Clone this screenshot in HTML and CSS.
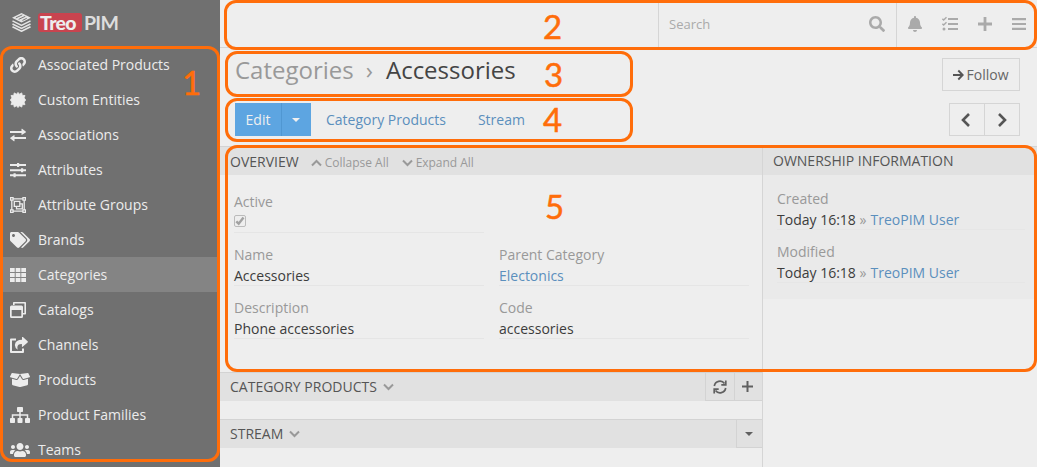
FILE: index.html
```
<!DOCTYPE html>
<html lang="en">
<head>
<meta charset="utf-8">
<title>TreoPIM - Accessories</title>
<link rel="stylesheet" href="styles.css">
</head>
<body>
<div class="app">
  <aside class="sidebar">
    <div class="brand">
      <svg class="brand-mark" viewBox="0 0 20 20"><path fill="#e4e4e4" d="M10 0 20 5 10 10 0 5z"/><path d="M4 5.2 10.8 2M7 6.700 14 3.500M11 7.800 15.500 5.600" stroke="#707070" stroke-width="1"/><path fill="none" stroke="#e4e4e4" stroke-width="1.700" d="M.5 8.300 10 13l9.500-4.700M.5 11.500 10 16.200l9.500-4.700M.5 14.500 10 19.200l9.500-4.700"/></svg>
      <span class="brand-treo">Treo</span><span class="brand-pim">PIM</span>
    </div>
    <nav class="menu">
      <a class="menu-item"><span class="menu-icon"><svg width="16" height="16" viewBox="0 0 512 512"><path d="M326.612 185.391c59.747 59.809 58.927 155.698.36 214.59-.11.12-.24.25-.36.37l-67.2 67.2c-59.27 59.27-155.699 59.262-214.96 0-59.27-59.26-59.27-155.7 0-214.96l37.106-37.106c9.84-9.84 26.786-3.3 27.294 10.606.648 17.722 3.826 35.527 9.69 52.721 1.986 5.822.567 12.262-3.783 16.612l-13.087 13.087c-28.026 28.026-28.905 73.66-1.155 101.96 28.024 28.579 74.086 28.749 102.325.51l67.2-67.19c28.191-28.191 28.073-73.757 0-101.83-3.701-3.694-7.429-6.564-10.341-8.569a16.037 16.037 0 0 1-6.947-12.606c-.396-10.567 3.348-21.456 11.698-29.806l21.054-21.055c5.521-5.521 14.182-6.199 20.584-1.731a152.482 152.482 0 0 1 20.522 17.197zM467.547 44.449c-59.261-59.262-155.69-59.27-214.96 0l-67.2 67.2c-.12.12-.25.25-.36.37-58.566 58.892-59.387 154.781.36 214.59a152.454 152.454 0 0 0 20.521 17.196c6.402 4.468 15.064 3.789 20.584-1.731l21.054-21.055c8.35-8.35 12.094-19.239 11.698-29.806a16.037 16.037 0 0 0-6.947-12.606c-2.912-2.005-6.64-4.875-10.341-8.569-28.073-28.073-28.191-73.639 0-101.83l67.2-67.19c28.239-28.239 74.3-28.069 102.325.51 27.75 28.3 26.872 73.934-1.155 101.96l-13.087 13.087c-4.35 4.35-5.769 10.79-3.783 16.612 5.864 17.194 9.042 34.999 9.69 52.721.509 13.906 17.454 20.446 27.294 10.606l37.106-37.106c59.271-59.259 59.271-155.699.001-214.959z"/></svg></span>Associated Products</a>
      <a class="menu-item"><span class="menu-icon"><svg width="16" height="16" viewBox="0 0 16 16"><path stroke="#ececec" stroke-width=".8" stroke-linejoin="round" d="m8 .4 1.400 1.800L11.800.9l.4 2.400 2.800.2-.9 2.400 1.600 2.100-1.600 2.100.9 2.500-2.800.1-.4 2.400-2.400-1.300L8 15.600l-1.400-1.800-2.400 1.300-.4-2.400-2.800-.1.900-2.500L.3 8l1.600-2.100L1 3.500l2.800-.2.400-2.400 2.400 1.300z"/></svg></span>Custom Entities</a>
      <a class="menu-item"><span class="menu-icon"><svg width="16" height="16" viewBox="0 0 16 16"><path d="M0 3.900h11.500V2.100q0-.7.6-.3l3.600 2.700q.5.500 0 .9l-3.600 2.400q-.6.400-.6-.3V5.900H0zM16 12.100H4.500v1.800q0 .7-.6.300L.3 11.600q-.5-.5 0-.9l3.600-2.500q.6-.4.6.3v1.600H16z"/></svg></span>Associations</a>
      <a class="menu-item"><span class="menu-icon"><svg width="16" height="16" viewBox="0 0 16 16"><path d="M0 2h16v2H0zM0 7.200h16v2H0zM0 12.300h16v2H0zM7 1h2.200v4H7zM11 6.200h2.200v4H11zM3.500 11.300h2.200v4H3.500z"/></svg></span>Attributes</a>
      <a class="menu-item"><span class="menu-icon"><svg width="16" height="16" viewBox="0 0 16 16"><path fill="none" stroke="#ececec" stroke-width="1.300" d="M1.800 1.800h12.400v12.400H1.800zM4.300 4.300h5.500v5H4.300zM9.800 6.800h2.500v5H6.500V9.300"/><path d="M0 0h3.700v3.700H0zM12.300 0H16v3.700h-3.700zM0 12.300h3.700V16H0zM12.300 12.300H16V16h-3.700z"/><path fill="#707070" d="M1.200 1.200h1.200v1.200H1.200zM13.600 1.200h1.200v1.200h-1.200zM1.200 13.600h1.200v1.200H1.200zM13.600 13.600h1.200v1.200h-1.200z"/></svg></span>Attribute Groups</a>
      <a class="menu-item"><span class="menu-icon"><svg width="20" height="16" viewBox="0 0 640 512"><path d="M497.941 225.941L286.059 14.059A48 48 0 0 0 252.118 0H48C21.490 0 0 21.490 0 48v204.118a48 48 0 0 0 14.059 33.941l211.882 211.882c18.744 18.745 49.136 18.746 67.882 0l204.118-204.118c18.745-18.745 18.745-49.137 0-67.882zM112 160c-26.510 0-48-21.490-48-48s21.490-48 48-48 48 21.490 48 48-21.490 48-48 48zm513.941 133.823L421.823 497.941c-18.745 18.745-49.137 18.745-67.882 0l-.36-.36L527.640 323.522c16.999-16.999 26.360-39.600 26.360-63.640s-9.362-46.641-26.360-63.640L331.397 0h48.721a48 48 0 0 1 33.941 14.059l211.882 211.882c18.745 18.745 18.745 49.137 0 67.882z"/></svg></span>Brands</a>
      <a class="menu-item active"><span class="menu-icon"><svg width="16" height="16" viewBox="0 0 16 16"><path d="M0 1h4.700v4H0zM5.700 1h4.700v4H5.700zM11.300 1H16v4h-4.700zM0 6h4.700v4H0zM5.700 6h4.700v4H5.700zM11.300 6H16v4h-4.700zM0 11h4.700v4H0zM5.700 11h4.700v4H5.700zM11.300 11H16v4h-4.700z"/></svg></span>Categories</a>
      <a class="menu-item"><span class="menu-icon"><svg width="16" height="16" viewBox="0 0 16 16"><path fill="none" stroke="#ececec" stroke-width="1.600" stroke-linejoin="round" d="M3.800 3V.8h11.400v11h-2.400"/><path fill-rule="evenodd" d="M1.500 3.500h10q1.500 0 1.500 1.500v9.500q0 1.500-1.500 1.500h-10Q0 16 0 14.500V5q0-1.500 1.500-1.500zM1.700 8v6.300h9.600V8z"/></svg></span>Catalogs</a>
      <a class="menu-item"><span class="menu-icon"><svg width="18" height="16" viewBox="0 0 18 16"><path fill="none" stroke="#ececec" stroke-width="2" stroke-linejoin="round" d="M6 2.500H1V15h12v-3.500"/><path d="M12 0q-.1-.7.600-.3l5 4.500q.6.600 0 1.200l-5 4.400q-.7.400-.7-.4V7Q7 6.900 7.400 11q.1 1 .4 1.700-3.500-2-2.800-5.500Q5.700 2.800 12 2.700z"/></svg></span>Channels</a>
      <a class="menu-item"><span class="menu-icon"><svg width="20" height="16" viewBox="0 0 640 512"><path d="M425.700 256c-16.900 0-32.800-9-41.400-23.400L320 126l-64.200 106.600c-8.700 14.500-24.600 23.500-41.500 23.500-4.500 0-9-.6-13.300-1.900L64 215v178c0 14.700 10 27.500 24.200 31l216.200 54.100c10.200 2.500 20.900 2.500 31 0L551.800 424c14.200-3.600 24.200-16.400 24.200-31V215l-137 39.100c-4.300 1.300-8.800 1.900-13.300 1.900zm212.600-112.200L586.800 41c-3.100-6.200-9.800-9.800-16.700-8.900L320 64l91.700 152.100c3.800 6.300 11.400 9.300 18.500 7.300l197.900-56.500c9.900-2.900 14.700-13.900 10.200-23.100zM53.200 41L1.700 143.800c-4.600 9.200.3 20.200 10.100 23l197.900 56.500c7.100 2 14.700-1 18.500-7.300L320 64 69.800 32.100c-6.900-.8-13.500 2.700-16.600 8.900z"/></svg></span>Products</a>
      <a class="menu-item"><span class="menu-icon"><svg width="20" height="16" viewBox="0 0 20 16"><rect x="7" width="6" height="5" rx=".8"/><rect y="11" width="5" height="5" rx=".8"/><rect x="7.500" y="11" width="5" height="5" rx=".8"/><rect x="15" y="11" width="5" height="5" rx=".8"/><path fill="none" stroke="#ececec" stroke-width="1.500" d="M10 4v8M2.500 11.500V8h15v3.500"/></svg></span>Product Families</a>
      <a class="menu-item"><span class="menu-icon"><svg width="20" height="16" viewBox="0 0 640 512"><path d="M96 224c35.300 0 64-28.700 64-64s-28.700-64-64-64-64 28.700-64 64 28.700 64 64 64zm448 0c35.300 0 64-28.700 64-64s-28.700-64-64-64-64 28.700-64 64 28.700 64 64 64zm32 32h-64c-17.600 0-33.500 7.100-45.100 18.600 40.300 22.100 68.900 62 75.100 109.400h66c17.700 0 32-14.300 32-32v-32c0-35.300-28.700-64-64-64zm-256 0c61.900 0 112-50.100 112-112S381.900 32 320 32 208 82.100 208 144s50.100 112 112 112zm76.800 32h-8.300c-20.800 10-43.900 16-68.500 16s-47.600-6-68.500-16h-8.300C179.600 288 128 339.600 128 403.200V432c0 26.500 21.500 48 48 48h288c26.500 0 48-21.500 48-48v-28.800c0-63.600-51.600-115.200-115.200-115.200zm-223.700-13.400C161.500 263.100 145.600 256 128 256H64c-35.300 0-64 28.700-64 64v32c0 17.700 14.300 32 32 32h65.900c6.300-47.400 34.900-87.300 75.200-109.400z"/></svg></span>Teams</a>
    </nav>
  </aside>

  <main class="main">
    <header class="topbar">
      <div class="search"><span>Search</span><svg width="16" height="16" viewBox="0 0 512 512"><path d="M505 442.700L405.300 343c-4.500-4.500-10.600-7-17-7H372c27.600-35.300 44-79.700 44-128C416 93.100 322.900 0 208 0S0 93.100 0 208s93.100 208 208 208c48.300 0 92.700-16.400 128-44v16.300c0 6.400 2.500 12.500 7 17l99.700 99.700c9.400 9.400 24.600 9.400 33.900 0l28.300-28.300c9.400-9.400 9.400-24.600.1-34zM208 336c-70.700 0-128-57.200-128-128 0-70.700 57.200-128 128-128 70.700 0 128 57.200 128 128 0 70.700-57.200 128-128 128z"/></svg></div>
      <div class="tool"><svg width="14" height="16" viewBox="0 0 448 512"><path d="M224 512c35.320 0 63.970-28.650 63.970-64H160.030c0 35.350 28.650 64 63.970 64zm215.390-149.710c-19.320-20.760-55.470-51.990-55.470-154.290 0-77.700-54.480-139.900-127.940-155.160V32c0-17.670-14.320-32-31.980-32s-31.980 14.330-31.980 32v20.840C118.560 68.100 64.080 130.300 64.080 208c0 102.300-36.150 133.530-55.470 154.290-6 6.450-8.660 14.160-8.610 21.710.11 16.400 12.980 32 32.100 32h383.800c19.120 0 32-15.600 32.100-32 .05-7.550-2.610-15.270-8.610-21.710z"/></svg></div>
      <div class="tool"><svg width="16" height="16" viewBox="0 0 16 16"><path d="M6 2h10v2H6zM6 7h10v2H6zM6 12h10v2H6z"/><circle cx="2" cy="13" r="1.500"/><path fill="none" stroke="#aaa" stroke-width="1.400" d="m.4 2.800 1.300 1.300L4.500 1.200M.4 7.800l1.300 1.300 2.800-2.900"/></svg></div>
      <div class="tool"><svg width="14" height="14" viewBox="0 0 14 14"><path d="M5.600 0h2.800v5.600H14v2.800H8.400V14H5.600V8.400H0V5.600h5.600z"/></svg></div>
      <div class="tool tool-menu"><svg width="14" height="14" viewBox="0 0 14 14"><path d="M0 1h14v2.200H0zM0 5.900h14v2.200H0zM0 10.800h14V13H0z"/></svg></div>
    </header>

    <div class="page-head">
      <div class="row">
        <h1 class="title"><span>Categories</span><i>›</i>Accessories</h1>
        <button class="btn follow"><svg width="11" height="12" viewBox="0 0 11 12"><path d="M0 6h9.500M5.300 1.500 9.700 6l-4.400 4.500" fill="none" stroke="#555" stroke-width="1.900"/></svg>Follow</button>
      </div>
      <div class="row">
        <div class="actions">
          <div class="edit"><button class="edit-main">Edit</button><button class="edit-more"><span class="caret"></span></button></div>
          <a class="tab tab-products">Category Products</a>
          <a class="tab">Stream</a>
        </div>
        <div class="pager">
          <button class="btn"><svg width="10" height="14" viewBox="0 0 10 14"><path d="M8 1 2 7l6 6" fill="none" stroke="#555" stroke-width="2.600"/></svg></button>
          <button class="btn"><svg width="10" height="14" viewBox="0 0 10 14"><path d="m2 1 6 6-6 6" fill="none" stroke="#555" stroke-width="2.600"/></svg></button>
        </div>
      </div>
    </div>

    <div class="columns">
      <div class="left">
        <section class="panel overview">
          <div class="panel-head">OVERVIEW
            <a class="toggle collapse"><svg width="11" height="8" viewBox="0 0 11 8"><path d="m1 6.500 4.500-4.500L10 6.500"/></svg>Collapse All</a>
            <a class="toggle expand"><svg width="11" height="8" viewBox="0 0 11 8"><path d="M1 1.500 5.500 6 10 1.500"/></svg>Expand All</a>
          </div>
          <div class="fields">
            <div class="field"><label>Active</label><div class="value"><span class="check"><svg width="10" height="10" viewBox="0 0 10 10"><path d="m1.300 5.300 2.400 2.400L8.500 1.500" fill="none" stroke="#a2a2a2" stroke-width="2.400"/></svg></span></div></div>
            <div></div>
            <div class="field"><label>Name</label><div class="value">Accessories</div></div>
            <div class="field"><label>Parent Category</label><div class="value"><a>Electonics</a></div></div>
            <div class="field"><label>Description</label><div class="value">Phone accessories</div></div>
            <div class="field"><label>Code</label><div class="value">accessories</div></div>
          </div>
        </section>
        <section class="panel related">
          <div class="panel-head">CATEGORY PRODUCTS<svg class="fold" width="11" height="8" viewBox="0 0 11 8"><path d="M1 1.500 5.500 6 10 1.500"/></svg>
            <div class="panel-tools"><span class="panel-tool refresh"><svg width="14" height="14" viewBox="0 0 14 14"><path d="M1.300 6a5.700 5.700 0 0 1 10.200-2.500M12.700 8a5.700 5.700 0 0 1-10.200 2.500M12.800.4v4.500H8.300M1.200 13.600V9.100h4.500" fill="none" stroke="#606060" stroke-width="1.700"/></svg></span><span class="panel-tool add"><svg width="11" height="11" viewBox="0 0 11 11"><path d="M5.500 0v11M0 5.500h11" stroke="#606060" stroke-width="2"/></svg></span></div>
          </div>
        </section>
        <section class="panel related">
          <div class="panel-head">STREAM<svg class="fold" width="11" height="8" viewBox="0 0 11 8"><path d="M1 1.500 5.500 6 10 1.500"/></svg>
            <div class="panel-tools"><span class="panel-tool more"><span class="caret dark"></span></span></div>
          </div>
        </section>
      </div>
      <div class="right">
        <div class="panel-head">OWNERSHIP INFORMATION</div>
        <div class="ownership">
          <div class="field"><label>Created</label><div class="value">Today 16:18 <em>»</em> <a>TreoPIM User</a></div></div>
          <div class="field"><label>Modified</label><div class="value">Today 16:18 <em>»</em> <a>TreoPIM User</a></div></div>
        </div>
      </div>
    </div>
  </main>
</div>

<div class="callout c1"><b>1</b></div>
<div class="callout c2"><b>2</b></div>
<div class="callout c3"><b>3</b></div>
<div class="callout c4"><b>4</b></div>
<div class="callout c5"><b>5</b></div>
</body>
</html>
```
FILE: styles.css
```
* { box-sizing: border-box; }
body {
  margin: 0;
  background: #eee;
  font: 14px/20px "Open Sans", sans-serif;
  color: #444;
  overflow: hidden;
}
svg { display: block; flex: none; }
button { font: inherit; margin: 0; padding: 0; }
a { color: #5b8fbd; }
.app { display: flex; height: 467px; }

/* Sidebar */
.sidebar { width: 220px; background: #707070; flex: none; }
.brand { height: 47px; padding: 0 0 2px 12px; display: flex; align-items: center; font: 900 19.5px/19px Lato, sans-serif; letter-spacing: -.7px; }
.brand-mark { width: 19px; height: 19px; margin-right: 7px; }
.brand-treo { background: #c9444f; color: #eee; border-radius: 3px; width: 44px; padding-left: 2px; }
.brand-pim { color: #ddd; margin-left: 2px; font-weight: 700; }
.menu-item { height: 35px; display: flex; align-items: center; color: #ececec; padding: 0 0 0 10px; }
.menu-item.active { background: #848484; }
.menu-icon { width: 28px; fill: #ececec; }

/* Top bar */
.main { flex: 1; min-width: 0; }
.topbar { height: 48px; border-bottom: 1px solid #d5d5d5; display: flex; justify-content: flex-end; }
.search { width: 239px; border: solid #d5d5d5; border-width: 0 1px; padding: 0 11px 0 10px; display: flex; align-items: center; justify-content: space-between; color: #aaa; font-size: 13px; }
.search svg, .tool svg { fill: #aaa; }
.tool { width: 35px; display: flex; align-items: center; justify-content: center; }
.tool-menu { padding-right: 2px; }

/* Page heading */
.page-head { padding: 10px 17px 10px 15px; display: grid; gap: 12px; }
.row { display: flex; justify-content: space-between; height: 33px; }
.title { margin: 0; font-size: 24px; line-height: 24px; font-weight: 400; color: #444; display: flex; }
.title span, .title i { color: #999; font-style: normal; }
.title i { margin: 0 13px 0 12px; }
.btn { border: 1px solid #d5d5d5; background: transparent; color: #666; display: flex; align-items: center; justify-content: center; }
.follow { width: 78px; gap: 3px; padding-right: 1px; }
.actions { display: flex; align-items: center; }
.edit { display: flex; height: 33px; width: 76px; margin-right: 15px; }
.edit button { border: 0; background: #5da5e1; color: #f0f0f0; display: flex; align-items: center; justify-content: center; }
.edit-main { width: 46px; }
.edit .edit-more { width: 30px; border-left: 1px solid #5097d2; padding-right: 1px; }
.caret { border: 4px solid transparent; border-top-color: #f0f0f0; border-bottom: 0; }
.caret.dark { border-top-color: #606060; }
.tab-products { margin-right: 32px; }
.pager { display: flex; }
.pager .btn { width: 36px; padding-right: 2px; }
.pager .btn + .btn { margin-left: -1px; padding-right: 0; }

/* Panels */
.columns { display: flex; height: 321px; }
.left { width: 543px; border-right: 1px solid #d5d5d5; }
.right { flex: 1; }
.panel-head { height: 29px; background: #e1e1e1; border-top: 1px solid #d3d3d3; padding: 2px 0 0 10px; display: flex; align-items: center; color: #555; }
.right .panel-head { padding-top: 0; }
.overview { height: 226px; }
.toggle { display: flex; align-items: center; gap: 3px; color: #999; font-size: 12px; padding-top: 2px; }
.toggle svg, .fold { fill: none; stroke: #999; stroke-width: 2; }
.collapse { margin-left: 12px; }
.expand { margin-left: 13px; letter-spacing: -.05px; }
.fold { margin-left: 6px; }
.fields { display: grid; grid-template-columns: 250px 250px; gap: 12px 15px; padding: 17px 14px 0; }
.field { height: 41px; border-bottom: 1px solid #e5e5e5; }
.field label { display: block; color: #999; }
.value { height: 20px; padding-top: 1px; color: #3c3c3c; }
.value em { font-style: normal; color: #999; }
.value em + a { margin-left: .5px; }
.check { display: flex; align-items: center; justify-content: center; width: 12px; height: 12px; border: 1px solid #bbb; border-radius: 2px; margin-top: 2px; }
.related { height: 47px; }
.related .panel-head { padding-top: 0; }
.panel-tools { margin-left: auto; display: flex; align-self: stretch; }
.panel-tool { border-left: 1px solid #d3d3d3; border-bottom: 1px solid #d3d3d3; display: flex; align-items: center; justify-content: center; padding-right: 1px; }
.refresh { width: 29px; }
.add { width: 28px; padding-right: 2px; }
.more { width: 26px; }
.ownership { background: #eaeaea; height: 124px; padding: 14px 12px 0 14px; display: grid; gap: 12px; align-content: start; }
.ownership .field { border-color: #e6e6e6; }

/* Numbered callouts drawn over the interface */
.callout { position: absolute; border: 3px solid #ff6d0a; border-radius: 12px; }
.callout b { position: absolute; font: 400 33px/40px Lato, sans-serif; color: #ff6d0a; -webkit-text-stroke: .5px #ff6d0a; }
.c1 { left: 0; top: 46px; width: 220px; height: 416px; }
.c2 { left: 224px; top: 0; width: 813px; height: 50px; }
.c3 { left: 225px; top: 51px; width: 408px; height: 46px; }
.c4 { left: 225px; top: 98px; width: 408px; height: 44px; }
.c5 { left: 225px; top: 145px; width: 812px; height: 227px; }
.c1 b { left: 179px; top: 13px; }
.c2 b { left: 316px; top: 3px; }
.c3 b { left: 316px; top: 0; }
.c4 b { left: 315px; top: -2px; }
.c5 b { left: 317px; top: 38px; }
```
